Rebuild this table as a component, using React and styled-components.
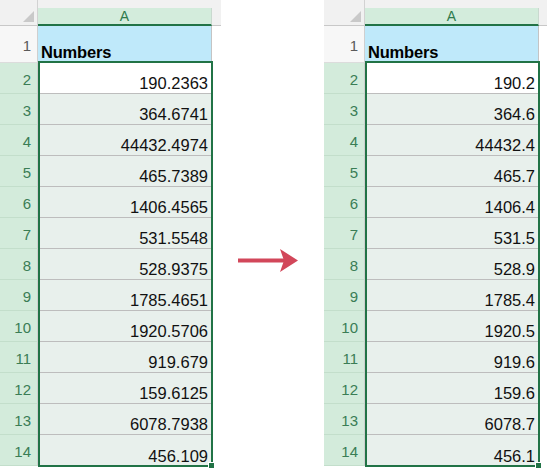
import React from "react";
import styled, { createGlobalStyle } from "styled-components";

const before = [
  "190.2363", "364.6741", "44432.4974", "465.7389", "1406.4565", "531.5548",
  "528.9375", "1785.4651", "1920.5706", "919.679", "159.6125", "6078.7938", "456.109",
];
const after = [
  "190.2", "364.6", "44432.4", "465.7", "1406.4", "531.5",
  "528.9", "1785.4", "1920.5", "919.6", "159.6", "6078.7", "456.1",
];

export default function App() {
  return (
    <>
      <Global />
      <Page>
        <Sheet head={38} tail={9} values={before} />
        <ArrowBox>
          <svg width="62" height="26" viewBox="0 0 62 26">
            <rect x="0" y="10.5" width="46" height="4" fill="#d2475a" />
            <polygon points="42,1 60,12.5 42,24 46,12.5" fill="#d2475a" />
          </svg>
        </ArrowBox>
        <Sheet head={41} tail={8} values={after} />
      </Page>
    </>
  );
}

function Sheet({ head, tail, values }) {
  return (
    <SheetWrap>
      <TopRow>
        <Corner $w={head}>
          <Triangle />
        </Corner>
        <ColHeader>A</ColHeader>
        <Tail $w={tail} />
      </TopRow>
      <Body>
        <Row $h={37}>
          <RowHead $w={head} $plain>1</RowHead>
          <TitleCell>Numbers</TitleCell>
        </Row>
        {values.map((v, i) => (
          <Row key={i} $h={31}>
            <RowHead $w={head}>{i + 2}</RowHead>
            <Cell $active={i === 0} $last={i === values.length - 1}>
              {v}
            </Cell>
          </Row>
        ))}
        <Selection $left={head}>
          <Handle />
        </Selection>
      </Body>
    </SheetWrap>
  );
}

const Global = createGlobalStyle`
  body {
    margin: 0;
    background: #fff;
    font-family: "Liberation Sans", Arial, sans-serif;
  }
`;

const Page = styled.div`
  display: flex;
  align-items: flex-start;
  width: 548px;
  height: 474px;
  overflow: hidden;
`;

const SheetWrap = styled.div`
  display: flex;
  flex-direction: column;
`;

const TopRow = styled.div`
  display: flex;
  height: 26px;
  background: #f1f1f1;
`;

const Corner = styled.div`
  box-sizing: border-box;
  width: ${(p) => p.$w}px;
  height: 26px;
  border-right: 1px solid #d2d2d2;
  border-bottom: 1px solid #c8c8c8;
  display: flex;
  align-items: flex-end;
  justify-content: flex-end;
  padding: 0 3px 3px 0;
`;

const Triangle = styled.span`
  width: 11px;
  height: 11px;
  background: #c9c9c9;
  clip-path: polygon(100% 0, 100% 100%, 0 100%);
`;

const ColHeader = styled.div`
  box-sizing: border-box;
  width: 174px;
  height: 18px;
  margin-top: 8px;
  background: #d3ecdc;
  border-right: 1px solid #c9d9cf;
  border-bottom: 2px solid #217346;
  color: #2e7a4c;
  font-size: 14px;
  display: flex;
  align-items: center;
  justify-content: center;
`;

const Tail = styled.div`
  width: ${(p) => p.$w}px;
  border-bottom: 1px solid #c8c8c8;
`;

const Body = styled.div`
  position: relative;
  display: flex;
  flex-direction: column;
`;

const Row = styled.div`
  display: flex;
  height: ${(p) => p.$h}px;
`;

const RowHead = styled.div`
  box-sizing: border-box;
  width: ${(p) => p.$w}px;
  background: ${(p) => (p.$plain ? "#f7f7f7" : "#d3ebdb")};
  color: ${(p) => (p.$plain ? "#5a5a5a" : "#3a7d55")};
  border-bottom: 1px solid ${(p) => (p.$plain ? "#dcdcdc" : "#c3decb")};
  border-right: 1px solid #cfcfcf;
  font-size: 15px;
  display: flex;
  align-items: center;
  justify-content: flex-end;
  padding: 2px 6px 0 0;
`;

const TitleCell = styled.div`
  box-sizing: border-box;
  width: 174px;
  background: #bfe9fa;
  border-right: 1px solid #c4c4c4;
  font-weight: bold;
  font-size: 16.5px;
  letter-spacing: -0.2px;
  color: #000;
  display: flex;
  align-items: flex-end;
  padding: 0 0 1px 3px;
`;

const Cell = styled.div`
  box-sizing: border-box;
  width: 174px;
  background: ${(p) => (p.$active ? "#ffffff" : "#e8f0ec")};
  border-bottom: ${(p) => (p.$last ? "none" : "1px solid #bdbdbd")};
  font-size: 16.5px;
  color: #111;
  display: flex;
  align-items: flex-end;
  justify-content: flex-end;
  padding: 0 4px 0 0;
`;

const Selection = styled.div`
  position: absolute;
  box-sizing: border-box;
  left: ${(p) => p.$left}px;
  top: 35px;
  width: 175px;
  height: 406px;
  border: 2px solid #217346;
  pointer-events: none;
`;

const Handle = styled.span`
  position: absolute;
  right: -4px;
  bottom: -4px;
  width: 5px;
  height: 5px;
  background: #217346;
  border: 1px solid #fff;
`;

const ArrowBox = styled.div`
  width: 103px;
  margin-top: 248px;
  display: flex;
  padding-left: 17px;
  box-sizing: border-box;
`;
